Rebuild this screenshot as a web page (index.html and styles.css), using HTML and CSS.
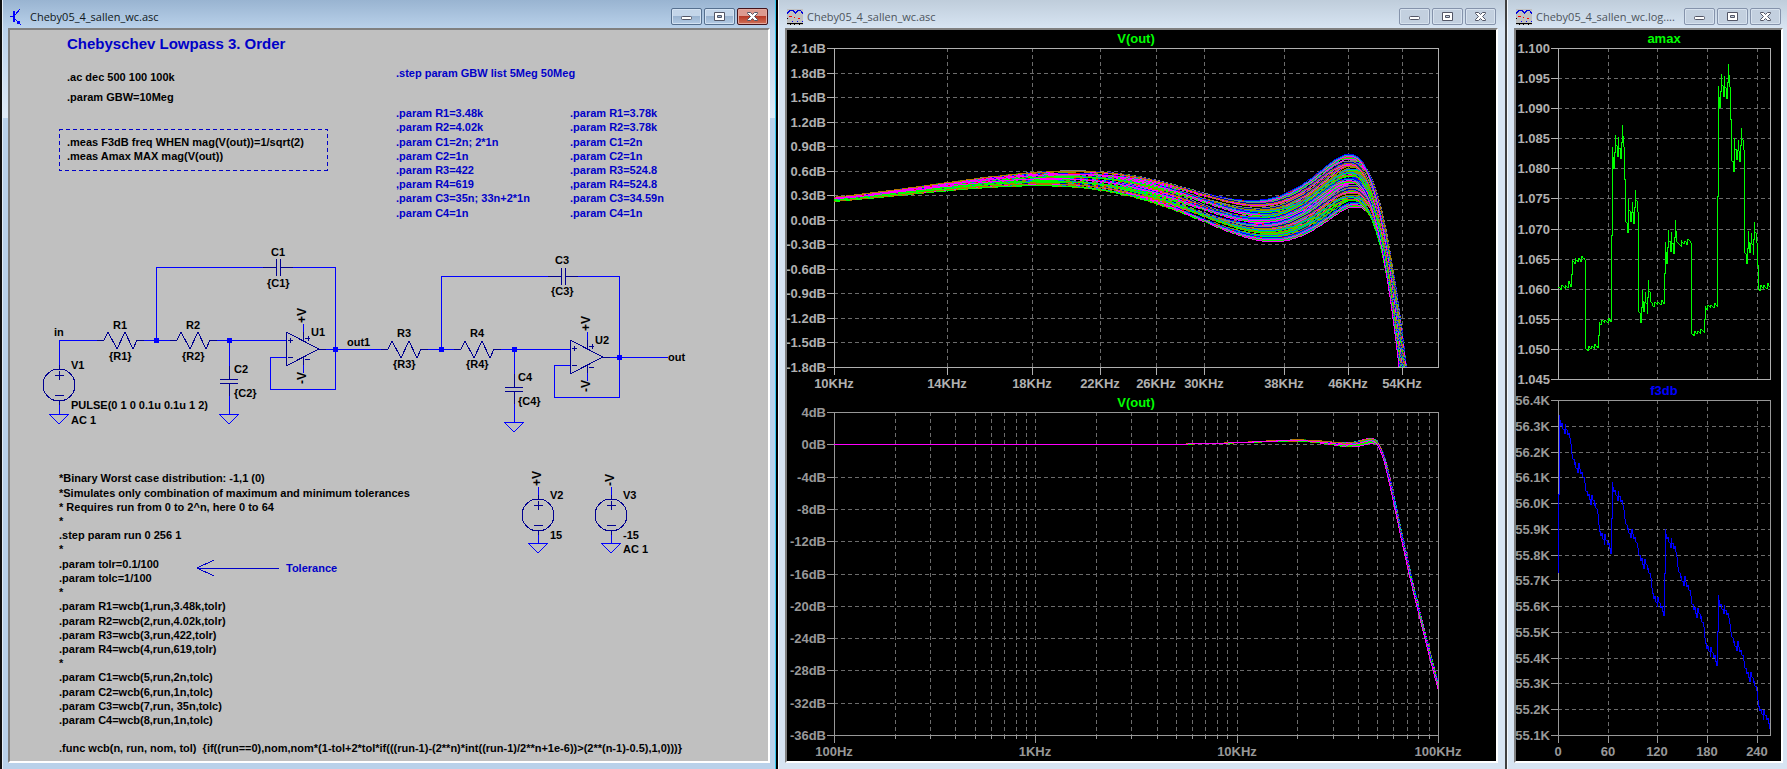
FILE: index.html
```html
<!DOCTYPE html>
<html lang="en">
<head>
    <meta charset="UTF-8">
    <meta name="viewport" content="width=device-width, initial-scale=1.0">
    <title>Cheby05_4_sallen_wc.asc</title>
    <link rel="stylesheet" href="styles.css">
</head>
<body>
    <!-- Shared shapes -->
    <svg class="defs" width="0" height="0" aria-hidden="true">
        <symbol id="ico-wave" viewBox="0 0 16 16">
            <rect width="16" height="16" fill="#c0c0c0"/>
            <path d="M0 3H1V5H0zM1 2H2V4H1zM2 1H3V3H2zM3 1H6V2H3zM6 1H7V3H6zM7 2H8V4H7zM8 3H9V5H8zM9 2H10V4H9zM10 1H11V3H10zM11 1H14V2H11zM14 2H15V4H14zM15 3H16V5H15z" fill="#0000e0"/>
            <path d="M2 7H5V8H2zM7 8H8V9H7zM11 9H13V10H11z" fill="#ff0000"/>
            <path d="M5 12H6V13H5zM10 12H11V13H10zM15 12H16V13H15z" fill="#0000ff"/>
            <path d="M0 14H16V15H0zM0 9H1V10H0zM3 15H4V16H3zM7 15H8V16H7zM12 15H13V16H12z" fill="#000"/>
        </symbol>
        <symbol id="ico-min" viewBox="0 0 31 17">
            <rect x="10.5" y="8.5" width="10" height="3" rx="1" fill="#fff" stroke="#535666"/>
        </symbol>
        <symbol id="ico-max" viewBox="0 0 31 17">
            <path d="M10.5 4.5H20.5V12.5H10.5zM13.5 7.5V9.5H17.5V7.5z" fill="#fff" fill-rule="evenodd" stroke="#535666"/>
        </symbol>
        <symbol id="ico-close" viewBox="0 0 31 17">
            <path d="M10.5 4.5H13.5L15.5 6.5 17.5 4.5H20.5V5.5L17.5 8.5 20.5 11.5V12.5H17.5L15.5 10.5 13.5 12.5H10.5V11.5L13.5 8.5 10.5 5.5z" fill="#fff" stroke="#535666"/>
        </symbol>
        <g id="res"><path d="M-7 0H0L4 -8 13 9 21 -8 29 9 33 0H40"/></g>
        <g id="cap"><path d="M-13 0H0M0 -8V9M4 -8V9M4 0H17"/></g>
        <g id="capv"><path d="M0 -13V0M-9 0H9M-9 4H9M0 4V17"/></g>
        <g id="gnd"><path d="M-10 0H10L0 10z"/></g>
        <g id="src"><circle r="16"/><path d="M0 -20V-16M0 16V20M-4 -10H5M0 -14V-5M-4 10H5"/></g>
        <g id="amp"><path d="M0 -17V17L33 0zM2 -9H7M4 -11V-6M2 8H7M17 -17V-8M17 8V16M19 -11H24M22 -13V-8M19 10H24M33 0H40"/></g>
    </svg>

    <main class="desktop">
        <section class="window active">
            <header class="titlebar">
                <svg class="icon" viewBox="0 0 16 16" aria-hidden="true">
                    <path d="M0 7.5H4M5 6 10 0M5 10 9 14" fill="none" stroke="#0000ff"/>
                    <path d="M3 2H5V13H3zM11 16 6 14 9 11z" fill="#0000ff"/>
                </svg>
                <h1>Cheby05_4_sallen_wc.asc</h1>
                <button type="button" aria-label="Minimize"><svg><use href="#ico-min"/></svg></button>
                <button type="button" aria-label="Maximize"><svg><use href="#ico-max"/></svg></button>
                <button type="button" class="close" aria-label="Close"><svg><use href="#ico-close"/></svg></button>
            </header>
            <div class="client">
                <svg class="sheet" viewBox="10 30 758 731">
                    <text class="heading" x="67" y="49">Chebyschev Lowpass 3. Order</text>
                    <g class="directive">
                        <text x="67" y="81">.ac dec 500 100 100k</text>
                        <text x="67" y="101">.param GBW=10Meg</text>
                        <text x="67" y="146">.meas F3dB freq WHEN mag(V(out))=1/sqrt(2)</text>
                        <text x="67" y="160">.meas Amax MAX mag(V(out))</text>
                    </g>
                    <rect class="frame" x="59" y="129" width="268" height="41"/>

                    <g class="comment">
                        <text x="396" y="77">.step param GBW list 5Meg 50Meg</text>
                        <text x="396" y="117">.param R1=3.48k</text>
                        <text x="396" y="131">.param R2=4.02k</text>
                        <text x="396" y="146">.param C1=2n; 2*1n</text>
                        <text x="396" y="160">.param C2=1n</text>
                        <text x="396" y="174">.param R3=422</text>
                        <text x="396" y="188">,param R4=619</text>
                        <text x="396" y="202">.param C3=35n; 33n+2*1n</text>
                        <text x="396" y="217">.param C4=1n</text>
                        <text x="570" y="117">.param R1=3.78k</text>
                        <text x="570" y="131">.param R2=3.78k</text>
                        <text x="570" y="146">.param C1=2n</text>
                        <text x="570" y="160">.param C2=1n</text>
                        <text x="570" y="174">.param R3=524.8</text>
                        <text x="570" y="188">,param R4=524.8</text>
                        <text x="570" y="202">.param C3=34.59n</text>
                        <text x="570" y="217">.param C4=1n</text>
                        <text x="286" y="572">Tolerance</text>
                    </g>
                    <path class="arrow" d="M279 568H197L214 560M197 568 214 576"/>

                    <!-- Wires -->
                    <g class="wire">
                        <path d="M59 365V340H97M144 340H170M156 340V267H263M293 267H335V389H270V357H286M217 340H286M229 340V366M229 396V414M303 324V332M303 365V373M326 349H381M59 405V414"/>
                        <path d="M428 349H454M441 349V276H548M578 276H619V397H554V365H570M501 349H570M514 349V374M514 404V422M587 332V340M587 373V381M610 357H668"/>
                        <path d="M538 487V495M538 535V543M611 487V495M611 535V543"/>
                        <use href="#gnd" x="59" y="414"/>
                        <use href="#gnd" x="229" y="414"/>
                        <use href="#gnd" x="514" y="422"/>
                        <use href="#gnd" x="538" y="543"/>
                        <use href="#gnd" x="611" y="543"/>
                    </g>
                    <!-- Components -->
                    <g class="part">
                        <use href="#res" x="104" y="340"/>
                        <use href="#res" x="177" y="340"/>
                        <use href="#res" x="388" y="349"/>
                        <use href="#res" x="461" y="349"/>
                        <use href="#cap" x="276" y="267"/>
                        <use href="#cap" x="561" y="276"/>
                        <use href="#capv" x="229" y="379"/>
                        <use href="#capv" x="514" y="387"/>
                        <use href="#amp" x="286" y="349"/>
                        <use href="#amp" x="570" y="357"/>
                        <use href="#src" x="59" y="385"/>
                        <use href="#src" x="538" y="515"/>
                        <use href="#src" x="611" y="515"/>
                    </g>
                    <path class="node" d="M154 338h5v5h-5zM227 338h5v5h-5zM333 347h5v5h-5zM439 347h5v5h-5zM512 347h5v5h-5zM617 355h5v5h-5z"/>

                    <g class="directive">
                        <text x="54" y="336">in</text>
                        <text x="347" y="346">out1</text>
                        <text x="668" y="361">out</text>
                        <text x="71" y="369">V1</text>
                        <text x="71" y="409">PULSE(0 1 0 0.1u 0.1u 1 2)</text>
                        <text x="71" y="424">AC 1</text>
                        <text x="113" y="329">R1</text>
                        <text x="109" y="360">{R1}</text>
                        <text x="186" y="329">R2</text>
                        <text x="182" y="360">{R2}</text>
                        <text x="271" y="256">C1</text>
                        <text x="267" y="287">{C1}</text>
                        <text x="234" y="373">C2</text>
                        <text x="234" y="397">{C2}</text>
                        <text x="311" y="336">U1</text>
                        <text x="397" y="337">R3</text>
                        <text x="393" y="368">{R3}</text>
                        <text x="470" y="337">R4</text>
                        <text x="466" y="368">{R4}</text>
                        <text x="555" y="264">C3</text>
                        <text x="551" y="295">{C3}</text>
                        <text x="518" y="381">C4</text>
                        <text x="518" y="405">{C4}</text>
                        <text x="595" y="344">U2</text>
                        <text x="550" y="499">V2</text>
                        <text x="550" y="539">15</text>
                        <text x="623" y="499">V3</text>
                        <text x="623" y="539">-15</text>
                        <text x="623" y="553">AC 1</text>
                    </g>
                    <g class="rail">
                        <text transform="translate(306 323) rotate(-90)">+V</text>
                        <text transform="translate(306 384) rotate(-90)">-V</text>
                        <text transform="translate(590 331) rotate(-90)">+V</text>
                        <text transform="translate(590 392) rotate(-90)">-V</text>
                        <text transform="translate(541 486) rotate(-90)">+V</text>
                        <text transform="translate(614 486) rotate(-90)">-V</text>
                    </g>

                    <g class="directive">
                        <text x="59" y="482">*Binary Worst case distribution: -1,1 (0)</text>
                        <text x="59" y="497">*Simulates only combination of maximum and minimum tolerances</text>
                        <text x="59" y="511">* Requires run from 0 to 2^n, here 0 to 64</text>
                        <text x="59" y="525">*</text>
                        <text x="59" y="539">.step param run 0 256 1</text>
                        <text x="59" y="553">*</text>
                        <text x="59" y="568">.param tolr=0.1/100</text>
                        <text x="59" y="582">.param tolc=1/100</text>
                        <text x="59" y="596">*</text>
                        <text x="59" y="610">.param R1=wcb(1,run,3.48k,tolr)</text>
                        <text x="59" y="625">.param R2=wcb(2,run,4.02k,tolr)</text>
                        <text x="59" y="639">.param R3=wcb(3,run,422,tolr)</text>
                        <text x="59" y="653">.param R4=wcb(4,run,619,tolr)</text>
                        <text x="59" y="667">*</text>
                        <text x="59" y="681">.param C1=wcb(5,run,2n,tolc)</text>
                        <text x="59" y="696">.param C2=wcb(6,run,1n,tolc)</text>
                        <text x="59" y="710">.param C3=wcb(7,run, 35n,tolc)</text>
                        <text x="59" y="724">.param C4=wcb(8,run,1n,tolc)</text>
                        <text x="59" y="752">.func wcb(n, run, nom, tol)  {if((run==0),nom,nom*(1-tol+2*tol*if(((run-1)-(2**n)*int((run-1)/2**n+1e-6))&gt;(2**(n-1)-0.5),1,0)))}</text>
                    </g>
                </svg>
            </div>
        </section>

        <section class="window">
            <header class="titlebar">
                <svg class="icon" aria-hidden="true"><use href="#ico-wave"/></svg>
                <h2>Cheby05_4_sallen_wc.asc</h2>
                <button type="button" aria-label="Minimize"><svg><use href="#ico-min"/></svg></button>
                <button type="button" aria-label="Maximize"><svg><use href="#ico-max"/></svg></button>
                <button type="button" aria-label="Close"><svg><use href="#ico-close"/></svg></button>
            </header>
            <div class="client dark">
                <svg class="sheet" id="bode" viewBox="787 30 709 731"></svg>
            </div>
        </section>

        <section class="window">
            <header class="titlebar">
                <svg class="icon" aria-hidden="true"><use href="#ico-wave"/></svg>
                <h2>Cheby05_4_sallen_wc.log....</h2>
                <button type="button" aria-label="Minimize"><svg><use href="#ico-min"/></svg></button>
                <button type="button" aria-label="Maximize"><svg><use href="#ico-max"/></svg></button>
                <button type="button" aria-label="Close"><svg><use href="#ico-close"/></svg></button>
            </header>
            <div class="client dark">
                <svg class="sheet" id="log" viewBox="1516 30 265 731"></svg>
            </div>
        </section>
    </main>
    <script src="charts.js"></script>
</body>
</html>
```
FILE: styles.css
```css
* {
    margin: 0;
    padding: 0;
    box-sizing: border-box;
}

body {
    background: #000;
    font-family: "Liberation Sans", Arial, sans-serif;
}

.defs {
    position: absolute;
}

.desktop {
    display: grid;
    grid-template-columns: 778fr 729fr 280fr;
    min-height: 100vh;
}

/* Window chrome */
.window {
    --frame: #d7e4f2;
    --top: #bfcddb;
    --edge: #404040;
    display: flex;
    flex-direction: column;
    min-width: 0;
    padding: 0 7px 6px 6px;
    border-left: 1px solid #f4f8fc;
    border-right: 2px solid var(--edge);
    background: linear-gradient(var(--top), var(--frame) 28px);
}

.window:last-child {
    padding-right: 4px;
    border-right: 0;
}

.window.active {
    --frame: #b9d1ea;
    --top: #99b4d1;
    padding-right: 6px;
    border-left: 2px solid #101010;
    border-right: 2px solid #000;
    box-shadow: inset -1px 0 #35c8ee, inset 1px 0 #e4eef8;
    background:
        linear-gradient(#b9d1ea, #dfeaf6) 0 28px / 8px 90px no-repeat,
        linear-gradient(#b9d1ea, #dfeaf6) 100% 28px / 8px 90px no-repeat,
        linear-gradient(var(--top), var(--frame) 28px);
}

.titlebar {
    display: flex;
    align-items: center;
    gap: 2px;
    height: 28px;
    padding: 8px 2px 3px;
}

.titlebar h1,
.titlebar h2 {
    flex: 1;
    min-width: 0;
    padding-left: 2px;
    color: #101820;
    font-family: "Open Sans", "Noto Sans", sans-serif;
    font-size: 11px;
    font-weight: 400;
    line-height: 17px;
    white-space: nowrap;
}

.titlebar h2 {
    color: #4d545c;
}

.icon {
    flex: none;
    width: 16px;
    height: 16px;
    shape-rendering: crispEdges;
}

.titlebar button {
    flex: none;
    width: 31px;
    height: 17px;
    border: 1px solid #8593ab;
    border-radius: 2px;
    background: #c3d0df;
    box-shadow: inset 0 0 0 1px #d7e2ee;
}

.active .titlebar button {
    border-color: #56708f;
    background: linear-gradient(#c3d5e9 50%, #9ab4d1 50%, #b4cbe4);
    box-shadow: inset 0 0 0 1px #d3e2f2;
}

.active .titlebar .close {
    border-color: #43141c;
    background: linear-gradient(#dc9a8f 50%, #b83a26 50%, #cf7159);
    box-shadow: inset 0 0 0 1px #e4a99f;
}

.titlebar button svg {
    display: block;
    width: 31px;
    height: 17px;
    margin: -1px;
}

.client {
    flex: 1;
    border: 2px solid;
    border-color: #808080 #fff #fff #808080;
    background: #c0c0c0;
}

.client.dark {
    background: #000;
}

.sheet {
    display: block;
    width: 100%;
}

/* Schematic */
.sheet text {
    font-size: 11px;
    font-weight: 700;
    white-space: pre;
}

.sheet .heading {
    fill: #0000c8;
    font-size: 15px;
}

.comment {
    fill: #0000c8;
}

.sheet .rail text {
    font-size: 12px;
}

.wire,
.part,
.frame,
.arrow {
    fill: none;
    shape-rendering: crispEdges;
}

.wire {
    stroke: #0000ff;
}

.part {
    stroke: #000090;
}

.frame {
    stroke: #0000c8;
    stroke-dasharray: 4 3;
}

.arrow {
    stroke: #0000c8;
}

.node {
    fill: #0000ff;
}

/* Plots */
.plot {
    --axis: #b0b0b0;
    --grid: #6c6c6c;
}

.plot.dim {
    --axis: #989898;
}

.sheet .plot text {
    fill: var(--axis);
    font-size: 13px;
}

.plot path {
    fill: none;
    shape-rendering: crispEdges;
}

.plot .axis {
    stroke: var(--axis);
}

.plot .grid {
    stroke: var(--grid);
    stroke-dasharray: 4 3;
}

.plot .end {
    text-anchor: end;
}

.plot .mid {
    text-anchor: middle;
}

.sheet .plot .green {
    fill: #00ff00;
}

.sheet .plot .blue {
    fill: #0000ff;
}
```
FILE: charts.js
```javascript
var NS = 'http://www.w3.org/2000/svg';
var COLORS = ['#00ff00', '#0000ff', '#ff0000', '#00b4b4', '#ff00ff', '#808080',
    '#008000', '#0000b0', '#b47800', '#80a000', '#800080', '#0078ff'];
var GBW = 10e6;

function add(parent, tag, attrs, text) {
    var el = document.createElementNS(NS, tag);
    for (var k in attrs) el.setAttribute(k, attrs[k]);
    if (text != null) el.textContent = text;
    parent.appendChild(el);
    return el;
}

// Worst case value of part n for a given run
function wcb(n, run, nom, tol) {
    if (run === 0) return nom;
    return nom * (((run - 1) >> (n - 1)) & 1 ? 1 + tol : 1 - tol);
}

// Gain of one unity gain Sallen-Key stage
function stage(f, r1, r2, c1, c2) {
    var w = 2 * Math.PI * f, k = f / GBW, g = 1 / (1 + k * k);
    var g1 = 1 / r1, g2 = 1 / r2, b = w * r2 * c2, y = w * c1;
    var re = g1 - b * y - y * k * g;
    var im = b * (g1 + g2) + y - y * g;
    return Math.sqrt(g) * g1 / Math.hypot(re, im);
}

function filter(run) {
    var tr = 0.001, tc = 0.01;
    var r1 = wcb(1, run, 3480, tr), r2 = wcb(2, run, 4020, tr);
    var r3 = wcb(3, run, 422, tr), r4 = wcb(4, run, 619, tr);
    var c1 = wcb(5, run, 2e-9, tc), c2 = wcb(6, run, 1e-9, tc);
    var c3 = wcb(7, run, 35e-9, tc), c4 = wcb(8, run, 1e-9, tc);
    return function (f) {
        return stage(f, r1, r2, c1, c2) * stage(f, r3, r4, c3, c4);
    };
}

var runs = [];
for (var run = 0; run <= 256; run++) runs.push(filter(run));

// Axes, grid and labels of one plot; returns the group for the traces
function plot(svg, o) {
    var g = add(svg, 'g', { 'class': 'plot' + (o.dim ? ' dim' : '') });
    var grid = '', axis = 'M' + o.x0 + ' ' + o.y0 + 'H' + o.x1 + 'V' + o.y1 + 'H' + o.x0 + 'z';
    o.rows.forEach(function (label, i) {
        var y = Math.round(o.y0 + (o.y1 - o.y0) * i / (o.rows.length - 1));
        if (i && i < o.rows.length - 1) grid += 'M' + o.x0 + ' ' + y + 'H' + o.x1;
        axis += 'M' + (o.x0 - 7) + ' ' + y + 'H' + o.x0;
        add(g, 'text', { x: o.x0 - 8, y: y + 5, 'class': 'end' }, label);
    });
    o.cols.forEach(function (c) {
        var x = Math.round(o.px(c[0]));
        if (x > o.x0 && x < o.x1) grid += 'M' + x + ' ' + o.y0 + 'V' + o.y1;
        if (o.noTicks) return;
        axis += 'M' + x + ' ' + o.y1 + 'V' + (o.y1 + (c[1] ? 8 : 4));
        if (c[1]) add(g, 'text', { x: x, y: o.y1 + 21, 'class': 'mid' }, c[1]);
    });
    add(g, 'path', { 'class': 'grid', d: grid });
    add(g, 'path', { 'class': 'axis', d: axis });
    add(g, 'text', { x: (o.x0 + o.x1) / 2, y: o.y0 - 5, 'class': 'mid ' + o.color }, o.title);
    var clip = add(g, 'clipPath', { id: o.id });
    add(clip, 'rect', { x: o.x0 - 1, y: o.y0, width: o.x1 - o.x0 + 2, height: o.y1 - o.y0 });
    return add(g, 'g', { 'clip-path': 'url(#' + o.id + ')' });
}

function range(from, step, n, fmt) {
    var out = [];
    for (var i = 0; i < n; i++) out.push(fmt(from + step * i));
    return out;
}

function sweep(g, o, f0, f1, top, perDb) {
    runs.forEach(function (h, n) {
        var d = '';
        for (var x = o.x0; x <= o.x1 + 1; x += 2) {
            var f = f0 * Math.pow(f1 / f0, (x - o.x0) / (o.x1 - o.x0));
            var y = o.y0 + (top - 20 * Math.log10(h(f))) * perDb;
            d += (d ? 'L' : 'M') + x + ' ' + Math.round(y);
        }
        add(g, 'path', { d: d, stroke: COLORS[n % COLORS.length] });
    });
}

function logX(o, f0, f1) {
    return function (f) {
        return o.x0 + (o.x1 - o.x0) * Math.log(f / f0) / Math.log(f1 / f0);
    };
}

// Bode plots
var bode = document.getElementById('bode');

var zoomed = { id: 'c1', x0: 834, x1: 1438, y0: 48, y1: 367, title: 'V(out)', color: 'green' };
zoomed.px = logX(zoomed, 10, 60);
zoomed.rows = range(2.1, -0.3, 14, function (v) { return (Math.abs(v) < 0.01 ? 0 : v).toFixed(1) + 'dB'; });
zoomed.cols = [10, 14, 18, 22, 26, 30, 38, 46, 54].map(function (f) { return [f, f + 'KHz']; });
sweep(plot(bode, zoomed), zoomed, 10e3, 60e3, 2.1, 319 / 3.9);

var full = { id: 'c2', x0: 834, x1: 1438, y0: 412, y1: 735, title: 'V(out)', color: 'green', dim: true };
full.px = logX(full, 100, 100e3);
full.rows = range(4, -4, 11, function (v) { return v + 'dB'; });
full.cols = [];
[100, 1000, 10000].forEach(function (dec) {
    for (var i = 1; i < 10; i++) {
        full.cols.push([dec * i, i > 1 ? '' : dec < 1000 ? dec + 'Hz' : dec / 1000 + 'KHz']);
    }
});
full.cols.push([100e3, '100KHz']);
sweep(plot(bode, full), full, 100, 100e3, 4, 323 / 40);

// Measurement log
function trace(g, values, o, min, max, color) {
    var d = '', last;
    values.forEach(function (v, i) {
        var x = Math.round(o.px(i));
        var y = Math.round(o.y1 - (v - min) / (max - min) * (o.y1 - o.y0));
        // long jumps go straight up or down, half in each column
        if (i && Math.abs(y - last) > 12) d += 'V' + Math.round((y + last) / 2) + 'H' + x;
        d += (i ? 'L' : 'M') + x + ' ' + y;
        last = y;
    });
    add(g, 'path', { d: d, stroke: color });
}

var amaxValues = runs.map(function (h) {
    var best = 0;
    for (var f = 15e3; f < 55e3; f *= 1.001) best = Math.max(best, h(f));
    return best;
});
var f3dbValues = runs.map(function (h) {
    var lo = 50e3, hi = 65e3;
    for (var i = 0; i < 30; i++) {
        var mid = (lo + hi) / 2;
        if (h(mid) > Math.SQRT1_2) lo = mid; else hi = mid;
    }
    return lo / 1000;
});

var log = document.getElementById('log');
var steps = [0, 60, 120, 180, 240].map(function (n) { return [n, String(n)]; });
function linX(n) { return 1558 + n * 212 / 256; }

var amax = { id: 'c3', x0: 1558, x1: 1770, y0: 48, y1: 379, title: 'amax', color: 'green', px: linX, cols: steps, noTicks: true };
amax.rows = range(1.1, -0.005, 12, function (v) { return v.toFixed(3); });
trace(plot(log, amax), amaxValues, amax, 1.045, 1.1, '#00ff00');

var f3db = { id: 'c4', x0: 1558, x1: 1770, y0: 400, y1: 735, title: 'f3db', color: 'blue', px: linX, cols: steps, dim: true };
f3db.rows = range(56.4, -0.1, 14, function (v) { return v.toFixed(1) + 'K'; });
trace(plot(log, f3db), f3dbValues, f3db, 55.1, 56.4, '#0000ff');
```
